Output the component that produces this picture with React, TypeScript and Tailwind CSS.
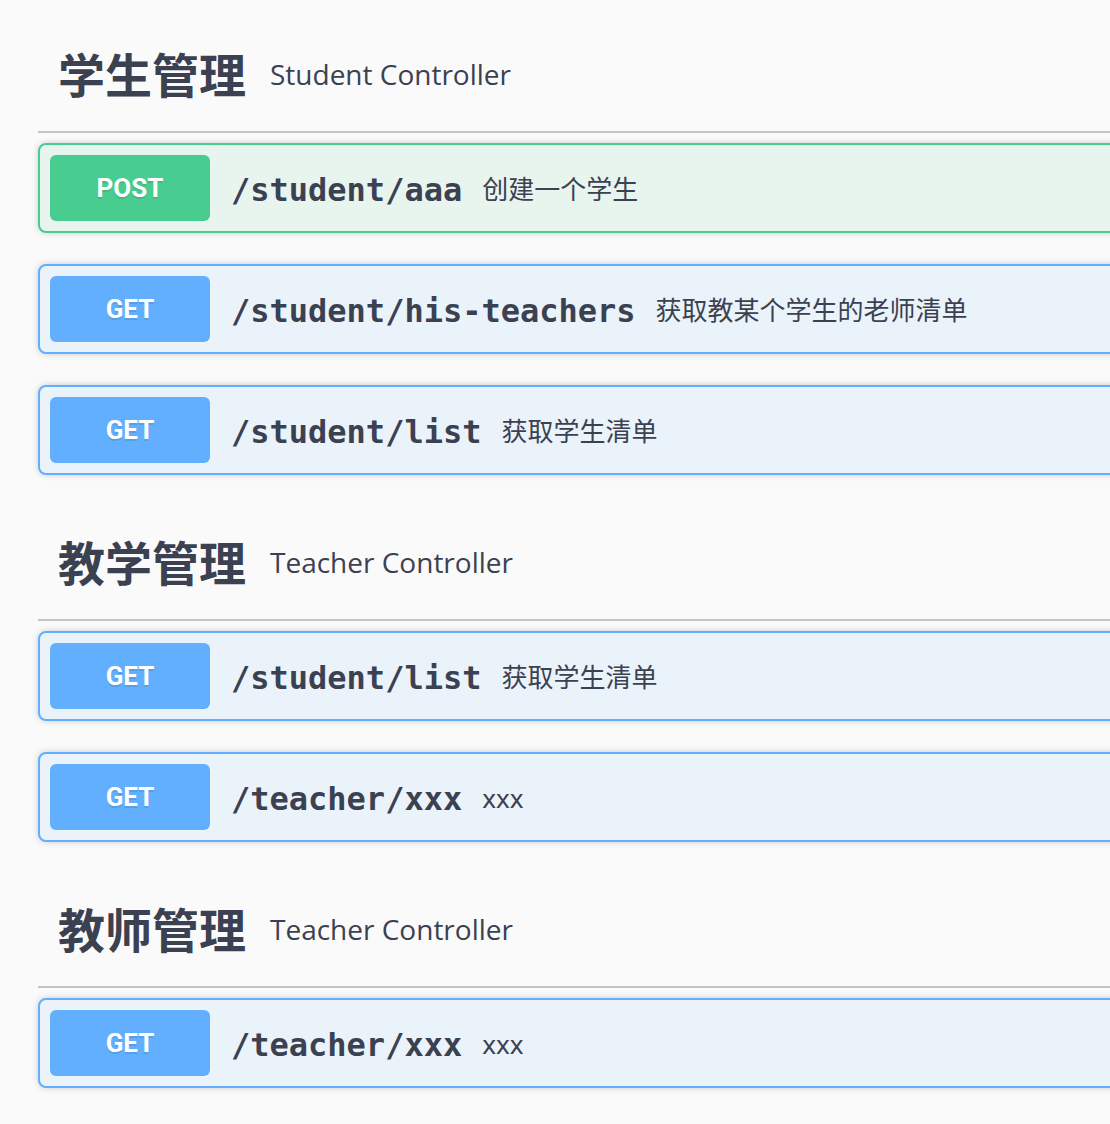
import React from 'react';

type Op = { method: 'GET' | 'POST'; path: string; summary: string };
type Tag = { name: string; description: string; ops: Op[] };

const tags: Tag[] = [
  {
    name: '学生管理',
    description: 'Student Controller',
    ops: [
      { method: 'POST', path: '/student/aaa', summary: '创建一个学生' },
      { method: 'GET', path: '/student/his-teachers', summary: '获取教某个学生的老师清单' },
      { method: 'GET', path: '/student/list', summary: '获取学生清单' },
    ],
  },
  {
    name: '教学管理',
    description: 'Teacher Controller',
    ops: [
      { method: 'GET', path: '/student/list', summary: '获取学生清单' },
      { method: 'GET', path: '/teacher/xxx', summary: 'xxx' },
    ],
  },
  {
    name: '教师管理',
    description: 'Teacher Controller',
    ops: [{ method: 'GET', path: '/teacher/xxx', summary: 'xxx' }],
  },
];

const OpBlock: React.FC<{ op: Op }> = ({ op }) => {
  const post = op.method === 'POST';
  return (
    <div
      className={
        post
          ? 'flex h-[90px] items-center rounded-[8px] border-2 border-[#49cc90] bg-[#e8f5ef] px-[10px] shadow-[0_0_6px_rgba(0,0,0,0.19)]'
          : 'flex h-[90px] items-center rounded-[8px] border-2 border-[#61affe] bg-[#ebf3fa] px-[10px] shadow-[0_0_6px_rgba(0,0,0,0.19)]'
      }
    >
      <span
        className={
          post
            ? 'flex h-[66px] w-[160px] items-center justify-center rounded-[6px] bg-[#49cc90] font-["Roboto",sans-serif] text-[26px] font-bold text-white [text-shadow:0_2px_0_rgba(0,0,0,0.1)]'
            : 'flex h-[66px] w-[160px] items-center justify-center rounded-[6px] bg-[#61affe] font-["Roboto",sans-serif] text-[26px] font-bold text-white [text-shadow:0_2px_0_rgba(0,0,0,0.1)]'
        }
      >
        {op.method}
      </span>
      <span className='pl-[21px] pr-[20px] pt-[4px] font-["DejaVu_Sans_Mono",monospace] text-[32px] font-bold text-[#3b4151]'>
        {op.path}
      </span>
      <span className='pt-[2px] font-["Noto_Sans","Noto_Sans_CJK_SC",sans-serif] text-[26px] text-[#3b4151]'>
        {op.summary}
      </span>
    </div>
  );
};

const App: React.FC = () => {
  return (
    <div className="min-h-[1124px] w-[1110px] overflow-hidden bg-[#fafafa] pt-[16px]">
      <div className="w-[1200px] pl-[38px]">
        {tags.map((tag, i) => (
          <section key={i} className="pb-[29px]">
            <div className="mb-[10px] flex h-[117px] items-center border-b-2 border-[#c1c3c7] pl-[20px]">
              <span className='font-["Noto_Sans_CJK_SC",sans-serif] text-[47px] font-bold text-[#3b4151]'>
                {tag.name}
              </span>
              <span className='pl-[24px] font-["Open_Sans",sans-serif] text-[28px] text-[#3b4151]'>
                {tag.description}
              </span>
            </div>
            <div className="flex flex-col gap-[31px]">
              {tag.ops.map((op, j) => (
                <OpBlock key={j} op={op} />
              ))}
            </div>
          </section>
        ))}
      </div>
    </div>
  );
};

export default App;
